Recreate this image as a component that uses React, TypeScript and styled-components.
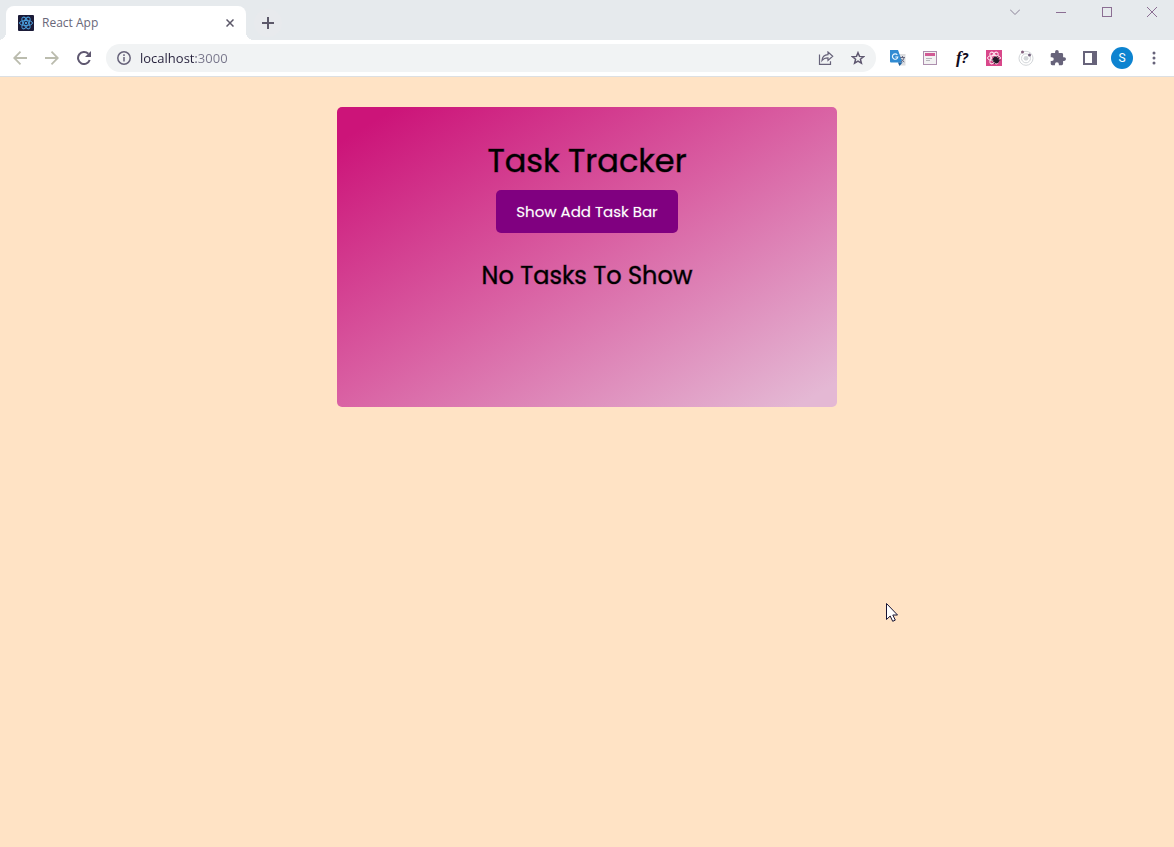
import React, { useState } from "react";
import styled, { createGlobalStyle } from "styled-components";

const GlobalStyle = createGlobalStyle`
  * { box-sizing: border-box; margin: 0; padding: 0; }
  body {
    min-height: 100vh;
    background: #ffe3c5;
    font-family: "Open Sans", "Noto Sans", sans-serif;
  }
  button { border: none; background: none; font: inherit; color: inherit; cursor: pointer; }
  svg { display: block; }
`;

const Browser = styled.div`
  display: flex;
  flex-direction: column;
  min-height: 100vh;
`;

const TabStrip = styled.div`
  display: flex;
  align-items: flex-start;
  height: 40px;
  padding-left: 6px;
  background: #e6eaed;
`;

const Tab = styled.div`
  position: relative;
  display: flex;
  align-items: center;
  gap: 8px;
  width: 240px;
  height: 34px;
  margin-top: 6px;
  padding: 0 8px 0 12px;
  border-radius: 8px 8px 0 0;
  background: #fff;
  &::before,
  &::after {
    content: "";
    position: absolute;
    bottom: 0;
    width: 8px;
    height: 8px;
  }
  &::before {
    right: 100%;
    background: radial-gradient(circle at 0 0, #e6eaed 8px, #fff 8px);
  }
  &::after {
    left: 100%;
    background: radial-gradient(circle at 100% 0, #e6eaed 8px, #fff 8px);
  }
`;

const TabTitle = styled.span`
  flex: 1;
  font-size: 12px;
  line-height: 16px;
  color: #696779;
`;

const SmallButton = styled.button`
  display: grid;
  place-items: center;
  width: 16px;
  height: 16px;
`;

const NewTabButton = styled.button`
  display: grid;
  place-items: center;
  width: 28px;
  height: 28px;
  margin: 9px 0 0 8px;
  border-radius: 50%;
  background: #e8eaed;
`;

const WindowControls = styled.div`
  display: flex;
  margin-left: auto;
`;

const WindowButton = styled.button<{ $last?: boolean }>`
  display: grid;
  place-items: center;
  width: ${(p) => (p.$last ? 44 : 46)}px;
  height: 24px;
`;

const Toolbar = styled.div`
  display: flex;
  align-items: center;
  height: 37px;
  padding: 0 4px;
  border-bottom: 1px solid #dcdfe2;
  background: #fff;
`;

const ToolButton = styled.button`
  display: grid;
  place-items: center;
  flex: none;
  width: 32px;
  height: 28px;
`;

const AddressBar = styled.div`
  display: flex;
  align-items: center;
  flex: 1;
  min-width: 0;
  height: 28px;
  margin: 0 6px;
  padding: 0 2px 0 10px;
  border-radius: 14px;
  background: #f1f3f4;
`;

const AddressInput = styled.input`
  flex: 1;
  min-width: 0;
  height: 20px;
  margin-left: 8px;
  border: none;
  outline: none;
  font: 13px/20px "Open Sans", "Noto Sans", sans-serif;
  color: transparent;
  caret-color: #25203b;
  background: linear-gradient(90deg, #25203b 56px, #77758a 56px);
  background-clip: text;
  -webkit-background-clip: text;
`;

const Avatar = styled.span`
  display: grid;
  place-items: center;
  width: 22px;
  height: 22px;
  border-radius: 50%;
  background: #0d83d0;
  color: #fff;
  font: 12px/22px Roboto, sans-serif;
`;

const Formula = styled.span`
  font: italic 700 17px/20px "Liberation Serif", serif;
  color: #100a20;
`;

const FormulaMark = styled.span`
  font: italic 700 14px/20px "Open Sans", sans-serif;
`;

const Page = styled.main`
  flex: 1;
  padding: 30px;
`;

const Card = styled.section`
  display: flex;
  flex-direction: column;
  align-items: center;
  max-width: 500px;
  min-height: 300px;
  margin: 0 auto;
  padding: 30px;
  border-radius: 5px;
  background: linear-gradient(to right bottom, #cc1479 6%, #d95fa2 48%, #e4b8d4 96%);
  font-family: Poppins, Inter, sans-serif;
  color: #000;
`;

const Title = styled.h1`
  font-size: 32px;
  font-weight: 400;
  line-height: 48px;
  -webkit-text-stroke: 1px rgba(0, 0, 0, 0.4);
`;

const ToggleButton = styled.button`
  margin: 5px 0 25px;
  padding: 10px 20px;
  border-radius: 5px;
  background: #800080;
  color: #fff;
  font-size: 15px;
  font-weight: 400;
  line-height: 23px;
  -webkit-text-stroke: 1px rgba(255, 255, 255, 0.2);
`;

const Message = styled.h2`
  font-size: 24px;
  font-weight: 400;
  line-height: 36px;
  -webkit-text-stroke: 1px rgba(0, 0, 0, 0.4);
`;

const Pointer = styled.svg`
  position: absolute;
  left: 885px;
  top: 602px;
`;

const ReactAtom = ({ color }: { color: string }) => (
  <g fill="none" stroke={color} strokeWidth="1">
    <ellipse cx="8" cy="8" rx="6.5" ry="2.6" />
    <ellipse cx="8" cy="8" rx="6.5" ry="2.6" transform="rotate(60 8 8)" />
    <ellipse cx="8" cy="8" rx="6.5" ry="2.6" transform="rotate(120 8 8)" />
    <circle cx="8" cy="8" r="1.2" fill={color} stroke="none" />
  </g>
);

export default function App() {
  const [url, setUrl] = useState("localhost:3000");
  return (
    <Browser>
      <GlobalStyle />
      <header>
        <TabStrip>
          <Tab>
            <svg width="16" height="16" viewBox="0 0 16 16">
              <rect width="16" height="16" rx="1" fill="#1b1b38" />
              <ReactAtom color="#4b9fdc" />
            </svg>
            <TabTitle>React App</TabTitle>
            <SmallButton aria-label="Close tab">
              <svg width="8" height="8" viewBox="0 0 8 8" stroke="#5c5869" strokeWidth="1.5">
                <path d="M.5 .5l7 7M7.5 .5l-7 7" />
              </svg>
            </SmallButton>
          </Tab>
          <NewTabButton aria-label="New tab">
            <svg width="12" height="12" viewBox="0 0 12 12" stroke="#5c5869" strokeWidth="2">
              <path d="M6 0v12M0 6h12" />
            </svg>
          </NewTabButton>
          <WindowControls>
            <WindowButton aria-label="Search tabs">
              <svg width="10" height="6" viewBox="0 0 10 6" fill="none" stroke="#8b8297">
                <path d="M0 .5l5 5 5-5" />
              </svg>
            </WindowButton>
            <WindowButton aria-label="Minimize">
              <svg width="10" height="2" viewBox="0 0 10 2" stroke="#8b6e93">
                <path d="M0 1.5h10" />
              </svg>
            </WindowButton>
            <WindowButton aria-label="Maximize">
              <svg width="10" height="10" viewBox="0 0 10 10" fill="none" stroke="#8b6e93">
                <rect x=".5" y=".5" width="9" height="9" />
              </svg>
            </WindowButton>
            <WindowButton $last aria-label="Close">
              <svg width="10" height="10" viewBox="0 0 10 10" stroke="#8b6e93">
                <path d="M0 0l10 10M10 0L0 10" />
              </svg>
            </WindowButton>
          </WindowControls>
        </TabStrip>

        <Toolbar>
          <ToolButton aria-label="Back">
            <svg width="14" height="14" viewBox="0 0 14 14" fill="none" stroke="#bbbcae" strokeWidth="1.8">
              <path d="M14 7H1.5M7.5.7L1.2 7l6.3 6.3" />
            </svg>
          </ToolButton>
          <ToolButton aria-label="Forward">
            <svg width="14" height="14" viewBox="0 0 14 14" fill="none" stroke="#bbbcae" strokeWidth="1.8">
              <path d="M0 7h12.500M6.500.7L12.800 7l-6.300 6.300" />
            </svg>
          </ToolButton>
          <ToolButton aria-label="Reload">
            <svg width="14" height="14" viewBox="0 0 14 14" fill="none" stroke="#5f5870" strokeWidth="2">
              <path d="M12.700 9A6 6 0 1 1 11.300 2.800" />
              <path d="M14 0v6H8z" fill="#5f5870" stroke="none" />
            </svg>
          </ToolButton>

          <AddressBar>
            <SmallButton aria-label="Site information">
              <svg width="14" height="14" viewBox="0 0 14 14" fill="none" stroke="#67637a" strokeWidth="1.500">
                <circle cx="7" cy="7" r="6.200" />
                <path d="M7 6v4.500M7 3.300v1.600" />
              </svg>
            </SmallButton>
            <AddressInput aria-label="Address" value={url} onChange={(e) => setUrl(e.target.value)} />
            <ToolButton aria-label="Share">
              <svg width="16" height="14" viewBox="0 0 16 14" fill="none" stroke="#67637a" strokeWidth="1.200">
                <path d="M1.500 3.500v9.800h11v-3" />
                <path d="M4 9.500C4.300 5.700 6.400 3.800 10 3.600V1l4.700 4.300L10 9.500V6.800C7.200 6.800 5.400 7.600 4 9.500z" />
              </svg>
            </ToolButton>
            <ToolButton aria-label="Bookmark this tab">
              <svg width="14" height="14" viewBox="0 0 14 14" fill="none" stroke="#5f5870" strokeWidth="1.500">
                <path d="M7 1.700l1.500 3.700 4 .3-3.100 2.600 1 3.900L7 10.100l-3.400 2.100 1-3.900L1.500 5.700l4-.3z" />
              </svg>
            </ToolButton>
          </AddressBar>

          <ToolButton aria-label="Translate">
            <svg width="16" height="16" viewBox="0 0 16 16">
              <path d="M6 4h9.500v11.500H9z" fill="#dcdde0" />
              <path d="M0 0h8l4.500 12.500H1a1 1 0 0 1-1-1z" fill="#318bd2" />
              <path d="M8 12.500h4.500L9.500 16z" fill="#1d5f9f" />
              <path d="M7.300 4.900A2.700 2.700 0 1 0 7.800 7H5.300" fill="none" stroke="#e8f5ff" strokeWidth="1.200" />
              <path d="M10 7.500h5M12.500 6v1.500M14 7.800c-.5 2-1.500 3.200-3 4M11.500 9c.7 1.500 1.500 2.300 2.800 3" fill="none" stroke="#686b83" />
            </svg>
          </ToolButton>
          <ToolButton aria-label="Notes">
            <svg width="14" height="14" viewBox="0 0 14 14">
              <rect x=".5" y=".5" width="13" height="13" fill="#f2f2f2" stroke="#ad8fae" />
              <path d="M2 3.500h10" stroke="#d15a94" strokeWidth="3" />
              <path d="M3 7.500h6M3 9.500h4" stroke="#b7b5bc" />
            </svg>
          </ToolButton>
          <ToolButton aria-label="Font finder">
            <Formula>
              f<FormulaMark>?</FormulaMark>
            </Formula>
          </ToolButton>
          <ToolButton aria-label="React developer tools">
            <svg width="16" height="16" viewBox="0 0 16 16">
              <rect width="16" height="16" fill="#d9478a" />
              <ReactAtom color="#ffe8ef" />
              <g transform="rotate(-35 10 10)" fill="#241a28" stroke="#241a28">
                <ellipse cx="10" cy="10" rx="2.500" ry="3.600" stroke="none" />
                <path d="M6.500 7.500l7 5M6.500 12.500l7-5M6 10h8" strokeWidth=".9" />
              </g>
            </svg>
          </ToolButton>
          <ToolButton aria-label="Orbit">
            <svg width="16" height="16" viewBox="0 0 16 16" fill="none" stroke="#d3d6d9">
              <circle cx="8" cy="8.300" r="7" />
              <circle cx="8" cy="8.300" r="4.500" />
              <circle cx="8" cy="8.300" r="2.400" fill="#d3d6d9" stroke="none" />
              <circle cx="4.500" cy="1.900" r="1.500" fill="#83607d" stroke="none" />
              <circle cx="11.500" cy="5" r="1.500" fill="#72617d" stroke="none" />
            </svg>
          </ToolButton>
          <ToolButton aria-label="Extensions">
            <svg width="16" height="16" viewBox="1 1 22 22" fill="#67637a">
              <path d="M20.500 11H19V7a2 2 0 0 0-2-2h-4V3.500a2.500 2.500 0 0 0-5 0V5H4a2 2 0 0 0-2 2v3.800h1.500a2.700 2.700 0 0 1 0 5.400H2V20a2 2 0 0 0 2 2h3.800v-1.500a2.700 2.700 0 0 1 5.400 0V22H17a2 2 0 0 0 2-2v-4h1.500a2.500 2.500 0 0 0 0-5z" />
            </svg>
          </ToolButton>
          <ToolButton aria-label="Side panel">
            <svg width="14" height="14" viewBox="0 0 14 14">
              <path fillRule="evenodd" fill="#67637a" d="M0 0h14v14H0zM2 2v10h7V2z" />
            </svg>
          </ToolButton>
          <ToolButton aria-label="Profile">
            <Avatar>S</Avatar>
          </ToolButton>
          <ToolButton aria-label="Menu">
            <svg width="4" height="14" viewBox="0 0 4 14" fill="#67637a">
              <circle cx="2" cy="2" r="1.500" />
              <circle cx="2" cy="7" r="1.500" />
              <circle cx="2" cy="12" r="1.500" />
            </svg>
          </ToolButton>
        </Toolbar>
      </header>

      <Page>
        <Card>
          <Title>Task Tracker</Title>
          <ToggleButton>Show Add Task Bar</ToggleButton>
          <Message>No Tasks To Show</Message>
        </Card>
      </Page>

      <Pointer width="14" height="22" viewBox="0 0 14 22" aria-hidden="true">
        <path
          d="M1.500 1.500v16l3.700-3.500 2.500 5.300 2.600-1.200-2.500-5.100h4.700z"
          fill="#fff"
          stroke="#171433"
          strokeWidth="1"
        />
      </Pointer>
    </Browser>
  );
}
